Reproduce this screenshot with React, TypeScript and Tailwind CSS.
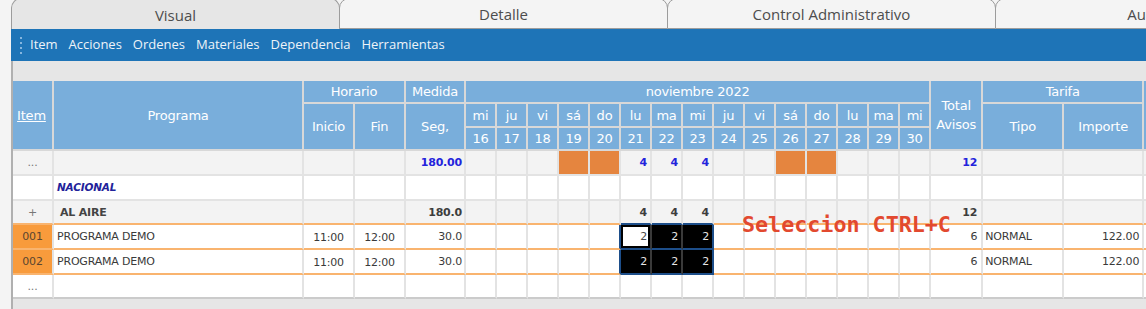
import React from "react";

const days = [
  { d: "mi", n: 16 }, { d: "ju", n: 17 }, { d: "vi", n: 18 }, { d: "sá", n: 19 },
  { d: "do", n: 20 }, { d: "lu", n: 21 }, { d: "ma", n: 22 }, { d: "mi", n: 23 },
  { d: "ju", n: 24 }, { d: "vi", n: 25 }, { d: "sá", n: 26 }, { d: "do", n: 27 },
  { d: "lu", n: 28 }, { d: "ma", n: 29 }, { d: "mi", n: 30 },
];
const weekend = new Set([19, 20, 26, 27]);
const sel = new Set([21, 22, 23]);

type Kind = "dots" | "nac" | "aire" | "p1" | "p2" | "end";

const H =
  "bg-[#79aedb] text-white font-normal text-[13px] p-0 text-center align-middle border-r-2 border-b-2 border-r-[#d8d8d8] border-b-[#d8d8d8]";

function rowBg(k: Kind) {
  return k === "dots" || k === "aire" ? "bg-[#f3f3f3]" : "bg-white";
}
function rowBottom(k: Kind) {
  if (k === "aire" || k === "p1" || k === "p2") return "border-b-[#f9b46f]";
  if (k === "end") return "border-b-[#cbcbcb]";
  return "border-b-[#e3e3e3]";
}

function Cell({ k, className = "", children }: { k: Kind; className?: string; children?: React.ReactNode }) {
  return (
    <td className={`p-0 align-middle border-r-2 border-b-2 border-r-[#e3e3e3] ${rowBottom(k)} ${className}`}>
      {children}
    </td>
  );
}

function DayCell({ k, n }: { k: Kind; n: number }) {
  const isSel = sel.has(n) && (k === "p1" || k === "p2");
  let bg = rowBg(k);
  if (k === "dots" && weekend.has(n)) bg = "bg-[#e5853f]";
  if (isSel) bg = "bg-black";
  const active = k === "p1" && n === 21;
  if (active) bg = "bg-white shadow-[inset_0_0_0_2px_#000]";

  let right = "border-r-[#e3e3e3]";
  if ((k === "p1" || k === "p2") && (n === 20 || n === 23)) right = "border-r-[#1d4e8a]";
  if ((k === "p1" || k === "p2") && (n === 21 || n === 22)) right = "border-r-[#3a3a3a]";

  let bottom = rowBottom(k);
  if ((k === "aire" || k === "p1" || k === "p2") && sel.has(n)) bottom = "border-b-[#1d4e8a]";

  let content: React.ReactNode = null;
  if (k === "dots" && sel.has(n)) content = <span className="font-bold text-[#2323dc]">4</span>;
  if (k === "aire" && sel.has(n)) content = <span className="font-bold text-[#3d3d3d]">4</span>;
  if (isSel) content = <span className={active ? "text-[#4a4a4a]" : "text-[#e6e6e6]"}>2</span>;

  return (
    <td className={`p-0 pr-[3px] text-right align-middle border-r-2 border-b-2 ${right} ${bottom} ${bg}`}>
      {content}
    </td>
  );
}

function BodyRow({ k, h }: { k: Kind; h: string }) {
  const bg = rowBg(k);
  const prog = k === "p1" || k === "p2";
  return (
    <tr className={h}>
      <Cell k={k} className={`text-center ${prog ? "bg-[#f89b3c] text-[#5a4630]" : `${bg} text-[#777]`}`}>
        {k === "dots" || k === "end" ? "..." : k === "aire" ? "+" : k === "p1" ? "001" : k === "p2" ? "002" : ""}
      </Cell>
      <Cell k={k} className={`${bg} text-left ${k === "aire" ? "pl-[6px]" : "pl-[3px]"}`}>
        {k === "nac" && <span className="italic font-bold text-[#22229a] text-[10.5px]">NACIONAL</span>}
        {k === "aire" && <span className="font-bold text-[#444]">AL AIRE</span>}
        {prog && <span className="text-[#3a3a3a]">PROGRAMA DEMO</span>}
      </Cell>
      <Cell k={k} className={`${bg} text-center text-[#3a3a3a]`}>
        {prog && <span className="relative top-[1px]">11:00</span>}
      </Cell>
      <Cell k={k} className={`${bg} text-center text-[#3a3a3a]`}>
        {prog && <span className="relative top-[1px]">12:00</span>}
      </Cell>
      <Cell k={k} className={`${bg} text-right pr-[2px]`}>
        {k === "dots" && <span className="font-bold text-[#2323dc]">180.00</span>}
        {k === "aire" && <span className="font-bold text-[#3d3d3d]">180.0</span>}
        {prog && <span className="text-[#3a3a3a]">30.0</span>}
      </Cell>
      {days.map((d) => (
        <DayCell key={d.n} k={k} n={d.n} />
      ))}
      <Cell k={k} className={`${bg} text-right pr-[4px]`}>
        {k === "dots" && <span className="font-bold text-[#2323dc]">12</span>}
        {k === "aire" && <span className="font-bold text-[#3d3d3d]">12</span>}
        {prog && <span className="text-[#3a3a3a]">6</span>}
      </Cell>
      <Cell k={k} className={`${bg} text-left pl-[2px]`}>
        {prog && <span className="text-[#3a3a3a]">NORMAL</span>}
      </Cell>
      <Cell k={k} className={`${bg} text-right pr-[3px]`}>
        {prog && <span className="text-[#3a3a3a]">122.00</span>}
      </Cell>
      <Cell k={k} className={bg} />
    </tr>
  );
}

export default function App() {
  const tabs = ["Visual", "Detalle", "Control Administrativo", "Auditoría"];
  const menu = ["Item", "Acciones", "Ordenes", "Materiales", "Dependencia", "Herramientas"];
  return (
    <div className="relative w-[1146px] h-[309px] overflow-hidden bg-[#f4f4f4]">
      <div className="ml-[11px] flex flex-col h-full">
        {/* tabs */}
        <div className="flex h-[31px] -mt-[2px] shrink-0 font-['Open_Sans',sans-serif]">
          {tabs.map((t, i) => (
            <div
              key={t}
              className={
                i === 0
                  ? "w-[329px] shrink-0 h-full rounded-t-[10px] border border-b-0 border-[#9c9c9c] bg-[#e6e6e6] flex items-center justify-center pt-[2px] text-[15px] text-[#4d4d4d]"
                  : "w-[329px] shrink-0 -ml-px h-full rounded-t-[10px] border border-[#9c9c9c] bg-[#f4f4f4] flex items-center justify-center pt-[2px] text-[15px] text-[#4d4d4d]"
              }
            >
              {t}
            </div>
          ))}
        </div>
        {/* toolbar */}
        <div className="h-[32px] shrink-0 bg-[#1e74b7] flex items-center pl-[9px] font-['Open_Sans',sans-serif] text-[13px] text-[#eef3f8]">
          <div className="flex flex-col gap-[3px]">
            <div className="w-[2px] h-[2px] bg-[#86b6df]" />
            <div className="w-[2px] h-[2px] bg-[#86b6df]" />
            <div className="w-[2px] h-[2px] bg-[#86b6df]" />
            <div className="w-[2px] h-[2px] bg-[#86b6df]" />
          </div>
          <div className="flex gap-[11px] ml-[8px]">
            {menu.map((m) => (
              <span key={m}>{m}</span>
            ))}
          </div>
        </div>
        {/* content */}
        <div className="flex-1 bg-[#e6e6e6] border-l-2 border-[#b0b0b0] pt-[20px] overflow-hidden">
          <table className="table-fixed border-separate border-spacing-0 w-[1191px] font-['DejaVu_Sans',sans-serif] text-[11px] tracking-[-0.2px] leading-none">
            <colgroup>
              <col className="w-[41px]" />
              <col className="w-[250px]" />
              <col className="w-[51px]" />
              <col className="w-[51px]" />
              <col className="w-[60px]" />
              {days.map((d) => (
                <col key={d.n} className="w-[31px]" />
              ))}
              <col className="w-[52px]" />
              <col className="w-[81px]" />
              <col className="w-[80px]" />
              <col className="w-[60px]" />
            </colgroup>
            <thead>
              <tr className="h-[23px]">
                <th rowSpan={3} className={H}>
                  <span className="underline relative -left-[1px]">Item</span>
                </th>
                <th rowSpan={3} className={H}>Programa</th>
                <th colSpan={2} className={H}>Horario</th>
                <th className={H}>Medida</th>
                <th colSpan={15} className={H}>noviembre 2022</th>
                <th rowSpan={3} className={`${H} leading-[19px]`}>
                  Total
                  <br />
                  Avisos
                </th>
                <th colSpan={2} className={H}>Tarifa</th>
                <th rowSpan={3} className={H}></th>
              </tr>
              <tr className="h-[24px]">
                <th rowSpan={2} className={H}>Inicio</th>
                <th rowSpan={2} className={H}>Fin</th>
                <th rowSpan={2} className={H}>Seg,</th>
                {days.map((d) => (
                  <th key={d.n} className={H}>{d.d}</th>
                ))}
                <th rowSpan={2} className={H}>Tipo</th>
                <th rowSpan={2} className={H}>Importe</th>
              </tr>
              <tr className="h-[23px]">
                {days.map((d) => (
                  <th key={d.n} className={H}>{d.n}</th>
                ))}
              </tr>
            </thead>
            <tbody>
              <BodyRow k="dots" h="h-[25px]" />
              <BodyRow k="nac" h="h-[25px]" />
              <BodyRow k="aire" h="h-[24px]" />
              <BodyRow k="p1" h="h-[25px]" />
              <BodyRow k="p2" h="h-[25px]" />
              <BodyRow k="end" h="h-[24px]" />
            </tbody>
          </table>
        </div>
      </div>
      <div className="absolute left-[742px] top-[214px] font-['DejaVu_Sans_Mono',monospace] font-bold text-[21.7px] leading-none text-[#e2492f] whitespace-nowrap">
        Seleccion CTRL+C
      </div>
    </div>
  );
}
